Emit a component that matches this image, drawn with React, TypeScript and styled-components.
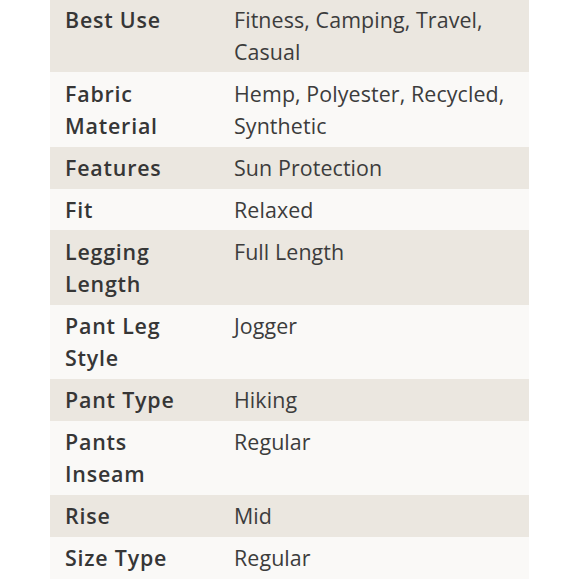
import React from "react";
import styled, { createGlobalStyle } from "styled-components";

const GlobalStyle = createGlobalStyle`
  html, body {
    margin: 0;
    padding: 0;
    background: #ffffff;
  }
  body {
    font-family: "Open Sans", "Liberation Sans", sans-serif;
    color: #3a3a3a;
    overflow: hidden;
  }
`;

type Spec = {
  label: string;
  value: string;
};

const SPECS: Spec[] = [
  { label: "Best Use", value: "Fitness, Camping, Travel, Casual" },
  { label: "Fabric Material", value: "Hemp, Polyester, Recycled, Synthetic" },
  { label: "Features", value: "Sun Protection" },
  { label: "Fit", value: "Relaxed" },
  { label: "Legging Length", value: "Full Length" },
  { label: "Pant Leg Style", value: "Jogger" },
  { label: "Pant Type", value: "Hiking" },
  { label: "Pants Inseam", value: "Regular" },
  { label: "Rise", value: "Mid" },
  { label: "Size Type", value: "Regular" },
];

const SpecTable = styled.div`
  width: 479px;
  margin: -1.7px 0 0 50px;
  display: flex;
  flex-direction: column;
`;

const SpecRow = styled.div<{ shaded: boolean }>`
  display: grid;
  grid-template-columns: 169px 1fr;
  background: ${({ shaded }) => (shaded ? "#ebe7e0" : "#faf9f7")};
`;

const Cell = styled.div`
  padding: 5.4px 15px 4.2px;
  font-size: 21.4px;
  line-height: 32.3px;
`;

const Label = styled(Cell)`
  font-weight: 600;
  color: #363636;
  letter-spacing: 0.8px;
`;

const Value = styled(Cell)`
  font-weight: 400;
  color: #3c3c3c;
  letter-spacing: 0.1px;
`;

const App = () => {
  return (
    <>
      <GlobalStyle />
      <SpecTable>
        {SPECS.map((spec, i) => (
          <SpecRow key={spec.label} shaded={i % 2 === 0}>
            <Label>{spec.label}</Label>
            <Value>{spec.value}</Value>
          </SpecRow>
        ))}
      </SpecTable>
    </>
  );
};

export default App;
